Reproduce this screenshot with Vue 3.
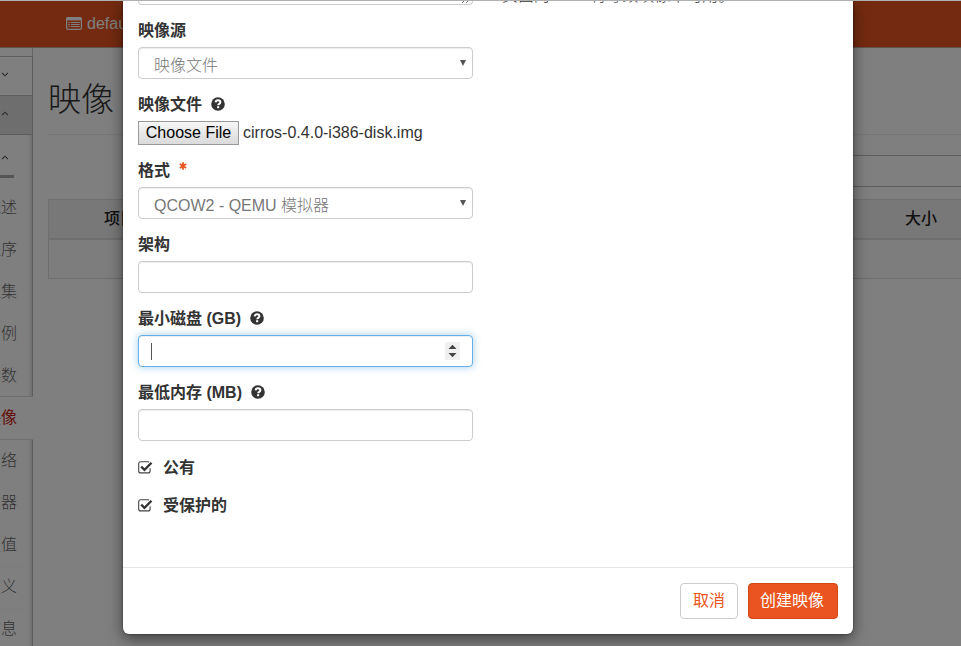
<script setup>
import { ref } from 'vue'

const navItems = ref([
  { label: '概述' },
  { label: '程序' },
  { label: '聚集' },
  { label: '实例' },
  { label: '参数' },
  { label: '映像', active: true },
  { label: '网络' },
  { label: '由器' },
  { label: '认值' },
  { label: '定义' },
  { label: '信息' },
])

const checks = ref(['公有', '受保护的'])

const fields = ref([
  { label: '映像源', type: 'select', value: '映像文件' },
  { label: '映像文件', type: 'file', value: 'cirros-0.4.0-i386-disk.img', help: true },
  { label: '格式', type: 'select', value: 'QCOW2 - QEMU 模拟器', required: true },
  { label: '架构', type: 'text' },
  { label: '最小磁盘 (GB)', type: 'number', help: true },
  { label: '最低内存 (MB)', type: 'text', help: true },
])
</script>

<template>
  <div class="screen">
    <header class="topbar">
      <svg class="list-icon" viewBox="0 0 16 13" width="16" height="13">
        <rect x="0.6" y="0.6" width="14.8" height="11.8" rx="1.2" fill="none" stroke="currentColor" stroke-width="1.2" />
        <rect x="0.6" y="0.6" width="14.8" height="2.8" fill="currentColor" />
        <path d="M2.3 5.5h1.4M2.3 7.5h1.4M2.3 9.5h1.4M4.8 5.5h8.9M4.8 7.5h8.9M4.8 9.5h8.9" stroke="currentColor" stroke-width="1.1" />
      </svg>
      <span>default</span>
    </header>

    <div class="page">
      <aside class="sidebar">
        <div class="side-gap"></div>
        <div class="side-group">
          <svg viewBox="0 0 8 5" width="8" height="5"><path d="M1 .8l3 3 3-3" /></svg>
        </div>
        <div class="side-group open">
          <svg viewBox="0 0 8 5" width="8" height="5"><path d="M1 4.2l3-3 3 3" /></svg>
        </div>
        <div class="side-sub">
          <svg viewBox="0 0 8 5" width="8" height="5"><path d="M1 4.2l3-3 3 3" /></svg>
          <i class="side-bar"></i>
        </div>
        <nav>
          <a v-for="item in navItems" :key="item.label" :class="{ active: item.active }"><span>{{ item.label }}</span></a>
        </nav>
      </aside>

      <main class="content">
        <h1>映像</h1>
        <div class="filter"></div>
        <div class="table">
          <div class="thead"><span>项目</span><span>大小</span></div>
          <div class="tbody"></div>
        </div>
      </main>
    </div>

    <div class="backdrop">
      <section class="modal">
        <div class="body">
          <div class="intro">
            <div class="textarea">
              <svg viewBox="0 0 10 8" width="10" height="8"><path d="M1 7l6-6M5 7l4-4" stroke="#777" fill="none" /></svg>
            </div>
            <p>页面的 URL 将导致映像不可用。</p>
          </div>

          <div v-for="f in fields" :key="f.label" class="field">
            <label>
              <span>{{ f.label }}</span>
              <svg v-if="f.help" class="help" viewBox="0 0 14 14" width="14" height="14">
                <circle cx="7" cy="7" r="6.8" fill="#333" />
                <path d="M4.6 5.3C4.8 3.9 5.8 3.3 7 3.3c1.3 0 2.4.7 2.4 2 0 1.5-2.2 1.5-2.2 2.9" fill="none" stroke="#fff" stroke-width="2" />
                <rect x="6.1" y="9.2" width="2.1" height="2" fill="#fff" />
              </svg>
              <svg v-if="f.required" class="star" viewBox="0 0 8 8" width="8" height="8">
                <path d="M4 .3v7.4M.8 2.1l6.4 3.8M.8 5.9l6.4-3.8" stroke="#e95420" stroke-width="1.8" />
              </svg>
            </label>
            <div v-if="f.type === 'select'" class="control select">
              <span>{{ f.value }}</span>
              <svg viewBox="0 0 6 6" width="6" height="6"><path d="M0 0h6L3 6z" fill="#555" /></svg>
            </div>
            <div v-else-if="f.type === 'file'" class="file">
              <button>Choose File</button><span>{{ f.value }}</span>
            </div>
            <div v-else-if="f.type === 'number'" class="control number">
              <i class="caret"></i>
              <span class="spinner">
                <svg viewBox="0 0 15 18" width="15" height="18">
                  <path d="M3.5 7l4-4.2 4 4.2zM3.5 11l4 4.2 4-4.2z" fill="#444" />
                </svg>
              </span>
            </div>
            <div v-else class="control"></div>
          </div>

          <div class="checks">
            <div v-for="c in checks" :key="c" class="check">
              <svg viewBox="0 0 15 13" width="15" height="13">
                <path d="M12.1 7.2v2.7a2 2 0 0 1-2 2H2.7a2 2 0 0 1-2-2V2.8a2 2 0 0 1 2-2h7.4l1 .3" fill="none" stroke="#444" stroke-width="1.1" />
                <path d="M3.2 5.6l3.3 3.2 7-7" fill="none" stroke="#333" stroke-width="2.3" />
              </svg>
              <span>{{ c }}</span>
            </div>
          </div>
        </div>
        <footer>
          <button class="btn cancel">取消</button>
          <button class="btn primary">创建映像</button>
        </footer>
      </section>
    </div>
    <div class="edge"></div>
  </div>
</template>

<style>
body {
  margin: 0;
  overflow: hidden;
}
</style>

<style scoped>
* {
  box-sizing: border-box;
}
.screen {
  position: relative;
  width: 961px;
  height: 646px;
  overflow: hidden;
  background: #fff;
  color: #333;
  font: 16px/24px 'Liberation Sans', 'Noto Sans CJK SC', sans-serif;
}
.topbar {
  height: 48px;
  padding-left: 66px;
  display: flex;
  align-items: center;
  gap: 5px;
  background: #e95420;
  border-bottom: 1px solid #c8a598;
  color: #fff;
}
.list-icon {
  margin-top: -1px;
}
.page {
  display: flex;
  height: 598px;
}
.sidebar {
  width: 33px;
  flex: none;
  display: flex;
  flex-direction: column;
}
.sidebar svg {
  fill: none;
  stroke: #555;
  stroke-width: 1.1;
}
.side-gap {
  flex: none;
  height: 8px;
  border-right: 1px solid #ccc;
}
.side-group {
  flex: none;
  height: 39px;
  padding: 15px 0 0 1px;
  line-height: 0;
  border: solid #bbb;
  border-width: 1px 1px 0 0;
}
.side-group.open {
  background: #dcdcdc;
}
.side-sub {
  flex: none;
  height: 52px;
  padding: 20px 0 0 1px;
  display: flex;
  flex-direction: column;
  line-height: 0;
  border: solid #bbb;
  border-width: 1px 1px 0 0;
  box-shadow: inset -4px 0 4px -3px #ccc;
}
.side-bar {
  width: 14px;
  height: 3px;
  margin: 15px 0 0 -1px;
  background: #aaa;
}
nav {
  flex: 1;
  min-height: 0;
  display: flex;
  flex-direction: column;
}
nav a {
  height: 42.1px;
  flex: none;
  display: flex;
  align-items: center;
  justify-content: flex-end;
  padding: 1px 15px 0 0;
  overflow: hidden;
  color: #666;
  font-weight: 300;
  white-space: nowrap;
  border-right: 1px solid #bbb;
  box-shadow: inset -4px 0 4px -3px #ccc;
}
nav a.active {
  height: 44px;
  padding: 0 16px 0 0;
  color: #c7251a;
  font-weight: 400;
  border: solid #ddd;
  border-width: 1px 0;
  box-shadow: none;
}
nav a.active ~ a {
  padding-top: 0;
  padding-bottom: 1px;
}
.content {
  flex: 1;
  padding: 0 0 0 15px;
}
h1 {
  height: 87px;
  margin: 0;
  padding-top: 29px;
  font-size: 33px;
  line-height: 46px;
  font-weight: 300;
  border-bottom: 1px solid #eee;
}
.filter {
  height: 32px;
  margin: 20px 0 12px 600px;
  border: solid #bbb;
  border-width: 1px 0;
}
.table {
  border: solid #ddd;
  border-width: 1px 0 1px 1px;
}
.thead {
  height: 40px;
  padding-left: 55px;
  display: flex;
  align-items: center;
  gap: 769px;
  background: #f0f0f0;
  border-bottom: 2px solid #ddd;
  font-weight: 500;
  color: #222;
}
.tbody {
  height: 38px;
  background: #fbfbfb;
}
.backdrop {
  position: absolute;
  inset: 0;
  padding-left: 123px;
  background: rgba(0, 0, 0, 0.5);
}
.modal {
  width: 730px;
  height: 634px;
  display: flex;
  flex-direction: column;
  background: #fff;
  border-radius: 0 0 6px 6px;
  box-shadow: 0 5px 15px rgba(0, 0, 0, 0.5), 0 0 2px rgba(0, 0, 0, 0.6);
}
.body {
  height: 567px;
  padding: 0 15px;
}
.intro {
  display: flex;
  height: 5px;
  margin-bottom: 13px;
}
.textarea {
  width: 335px;
  height: 5px;
  padding-right: 1px;
  display: flex;
  align-items: flex-end;
  justify-content: flex-end;
  overflow: hidden;
  border: 1px solid #ccc;
  border-top: 0;
  border-radius: 0 0 4px 4px;
}
.intro p {
  margin: -16px 0 0 29px;
  white-space: nowrap;
  font-weight: 300;
}
.field {
  margin-bottom: 13px;
}
label {
  height: 24px;
  margin-bottom: 5px;
  display: flex;
  align-items: center;
  font-weight: 700;
}
label span,
.check span {
  padding-top: 2px;
}
.help {
  margin-left: 9px;
}
.star {
  margin: -9px 0 0 9px;
}
.control {
  width: 335px;
  height: 32px;
  display: flex;
  align-items: center;
  background: #fff;
  border: 1px solid #ccc;
  border-radius: 4px;
  box-shadow: inset 0 1px 1px rgba(0, 0, 0, 0.075);
}
.select {
  justify-content: space-between;
  padding: 5px 6px 0 15px;
  color: #777;
  font-weight: 300;
}
.select svg {
  margin-top: -6px;
}
.file {
  height: 24px;
  display: flex;
  gap: 4px;
  line-height: 24px;
}
.file button {
  width: 101px;
  height: 24px;
  padding: 0;
  font: 16px/20px 'Liberation Sans', sans-serif;
  color: #000;
  background: linear-gradient(#f6f6f6, #dadada);
  border: 1px solid #999;
  border-radius: 0;
}
.number {
  justify-content: space-between;
  padding: 0 12px;
  border-color: #66afe9;
  box-shadow: inset 0 1px 1px rgba(0, 0, 0, 0.075), 0 0 8px rgba(102, 175, 233, 0.6);
}
.caret {
  width: 1px;
  height: 17px;
  background: #555;
}
.spinner {
  height: 18px;
  display: flex;
  background: #f0f0f0;
}
.checks {
  padding-top: 1px;
  display: flex;
  flex-direction: column;
  gap: 14px;
}
.check {
  height: 24px;
  display: flex;
  align-items: center;
  gap: 10px;
  font-weight: 700;
}
footer {
  height: 67px;
  padding: 15px;
  display: flex;
  justify-content: flex-end;
  gap: 10px;
  border-top: 1px solid #e5e5e5;
}
.btn {
  height: 36px;
  padding: 0 12px;
  border-radius: 4px;
  font: inherit;
}
.cancel {
  color: #e95420;
  background: #fff;
  border: 1px solid #ccc;
}
.primary {
  padding: 0 13px 0 11px;
  color: #fff;
  background: #e95420;
  border: 1px solid #d34615;
}
.edge {
  position: absolute;
  inset: 0 0 auto;
  height: 1px;
  background: #b0b0b0;
}
</style>
